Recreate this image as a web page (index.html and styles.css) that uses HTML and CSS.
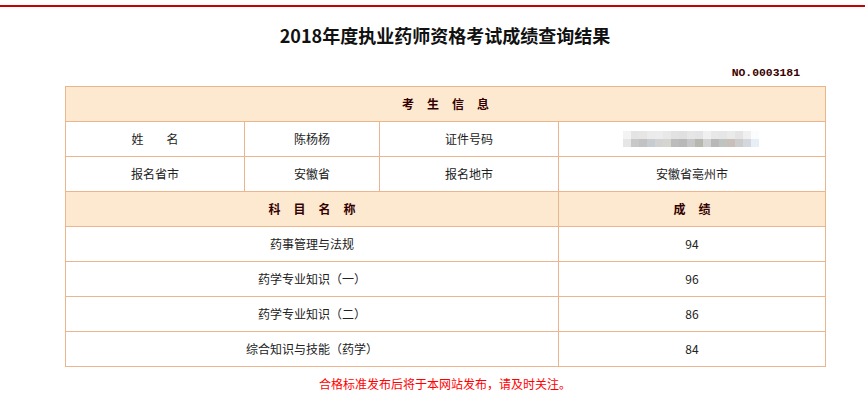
FILE: index.html
```html
<!DOCTYPE html>
<html lang="zh-CN">
<head>
<meta charset="utf-8">
<title>2018年度执业药师资格考试成绩查询结果</title>
<link rel="stylesheet" href="styles.css">
</head>
<body>
<div class="topbar"></div>
<div class="wrap">
  <h1 class="title">2018年度执业药师资格考试成绩查询结果</h1>
  <div class="no">NO.0003181</div>
  <table class="grid">
    <colgroup>
      <col class="c1"><col class="c2"><col class="c3"><col class="c4">
    </colgroup>
    <tr class="head"><td colspan="4"><span class="sp">考生信息</span></td></tr>
    <tr><td><span class="name-lbl">姓<span class="gap"></span>名</span></td><td>陈杨杨</td><td>证件号码</td><td>
      <svg class="mosaic" width="136" height="16" viewBox="0 0 136 16">
        <rect x="0" y="0" width="8" height="8" fill="#f3f3f3"/>
        <rect x="8" y="0" width="8" height="8" fill="#e4e4e4"/>
        <rect x="16" y="0" width="8" height="8" fill="#e6e6e6"/>
        <rect x="24" y="0" width="8" height="8" fill="#ebebeb"/>
        <rect x="32" y="0" width="8" height="8" fill="#ececec"/>
        <rect x="40" y="0" width="8" height="8" fill="#e8e8e8"/>
        <rect x="48" y="0" width="8" height="8" fill="#e2e2e2"/>
        <rect x="56" y="0" width="8" height="8" fill="#e0e0e0"/>
        <rect x="64" y="0" width="8" height="8" fill="#e6e6e6"/>
        <rect x="72" y="0" width="8" height="8" fill="#e4e4e6"/>
        <rect x="80" y="0" width="8" height="8" fill="#f0f0f0"/>
        <rect x="88" y="0" width="8" height="8" fill="#e8e8e8"/>
        <rect x="96" y="0" width="8" height="8" fill="#e6e6e6"/>
        <rect x="104" y="0" width="8" height="8" fill="#eaeaea"/>
        <rect x="112" y="0" width="8" height="8" fill="#e4e4e4"/>
        <rect x="120" y="0" width="8" height="8" fill="#f0f0f0"/>
        <rect x="128" y="0" width="8" height="8" fill="#fafcfe"/>
        <rect x="0" y="8" width="8" height="8" fill="#e6e6e6"/>
        <rect x="8" y="8" width="8" height="8" fill="#c8c8c8"/>
        <rect x="16" y="8" width="8" height="8" fill="#c2c2c2"/>
        <rect x="24" y="8" width="8" height="8" fill="#c6ccd0"/>
        <rect x="32" y="8" width="8" height="8" fill="#d2d2d2"/>
        <rect x="40" y="8" width="8" height="8" fill="#d6d4ce"/>
        <rect x="48" y="8" width="8" height="8" fill="#bcbcbc"/>
        <rect x="56" y="8" width="8" height="8" fill="#b8b8b8"/>
        <rect x="64" y="8" width="8" height="8" fill="#c6c6c6"/>
        <rect x="72" y="8" width="8" height="8" fill="#b6b8b0"/>
        <rect x="80" y="8" width="8" height="8" fill="#d2d2d2"/>
        <rect x="88" y="8" width="8" height="8" fill="#b8b8b8"/>
        <rect x="96" y="8" width="8" height="8" fill="#c0c4c0"/>
        <rect x="104" y="8" width="8" height="8" fill="#c8c0b8"/>
        <rect x="112" y="8" width="8" height="8" fill="#cccccc"/>
        <rect x="120" y="8" width="8" height="8" fill="#d4d8de"/>
        <rect x="128" y="8" width="8" height="8" fill="#e8eef6"/>
      </svg>
    </td></tr>
    <tr><td>报名省市</td><td>安徽省</td><td>报名地市</td><td>安徽省亳州市</td></tr>
    <tr class="head"><td colspan="3"><span class="sp">科目名称</span></td><td><span class="sp">成绩</span></td></tr>
    <tr><td colspan="3">药事管理与法规</td><td>94</td></tr>
    <tr><td colspan="3">药学专业知识（一）</td><td>96</td></tr>
    <tr><td colspan="3">药学专业知识（二）</td><td>86</td></tr>
    <tr><td colspan="3">综合知识与技能（药学）</td><td>84</td></tr>
  </table>
  <p class="note">合格标准发布后将于本网站发布，请及时关注。</p>
</div>
</body>
</html>
```
FILE: styles.css
```css
html, body {
  margin: 0;
  padding: 0;
  background: #fff;
}
body {
  font-family: "Noto Sans CJK SC", "Liberation Sans", sans-serif;
  color: #222;
}
.topbar {
  margin-top: 5px;
  height: 2px;
  background: #c40000;
}
.wrap {
  width: 760px;
  margin-left: 65px;
}
.title {
  margin: 16px 0 0;
  font-size: 18px;
  line-height: 24px;
  font-weight: bold;
  text-align: center;
  color: #111;
  letter-spacing: 0;
}
.no {
  margin-top: 19px;
  padding-right: 25px;
  text-align: right;
  font-family: "Liberation Mono", monospace;
  font-weight: bold;
  font-size: 11.4px;
  line-height: 14px;
  color: #3a0000;
}
.grid {
  margin-top: 6px;
  width: 760px;
  border-collapse: collapse;
  table-layout: fixed;
  font-size: 12px;
}
.c1 { width: 179px; }
.c2 { width: 135px; }
.c3 { width: 179px; }
.c4 { width: 267px; }
.grid td {
  border: 1px solid #ebb58d;
  height: 34px;
  padding: 0;
  text-align: center;
  vertical-align: middle;
  line-height: 16px;
}
.grid .head td {
  background: #fde9cf;
  font-weight: bold;
  color: #330000;
}
.sp {
  letter-spacing: 13px;
  padding-left: 13px;
}
.name-lbl {
  display: inline-flex;
  align-items: center;
}
.gap {
  display: inline-block;
  width: 23px;
}
.mosaic {
  display: block;
  margin: 0 auto;
  position: relative;
  left: -1px;
}
.note {
  margin: 9px 0 0;
  text-align: center;
  font-size: 12px;
  line-height: 16px;
  color: #ff0000;
}
```
